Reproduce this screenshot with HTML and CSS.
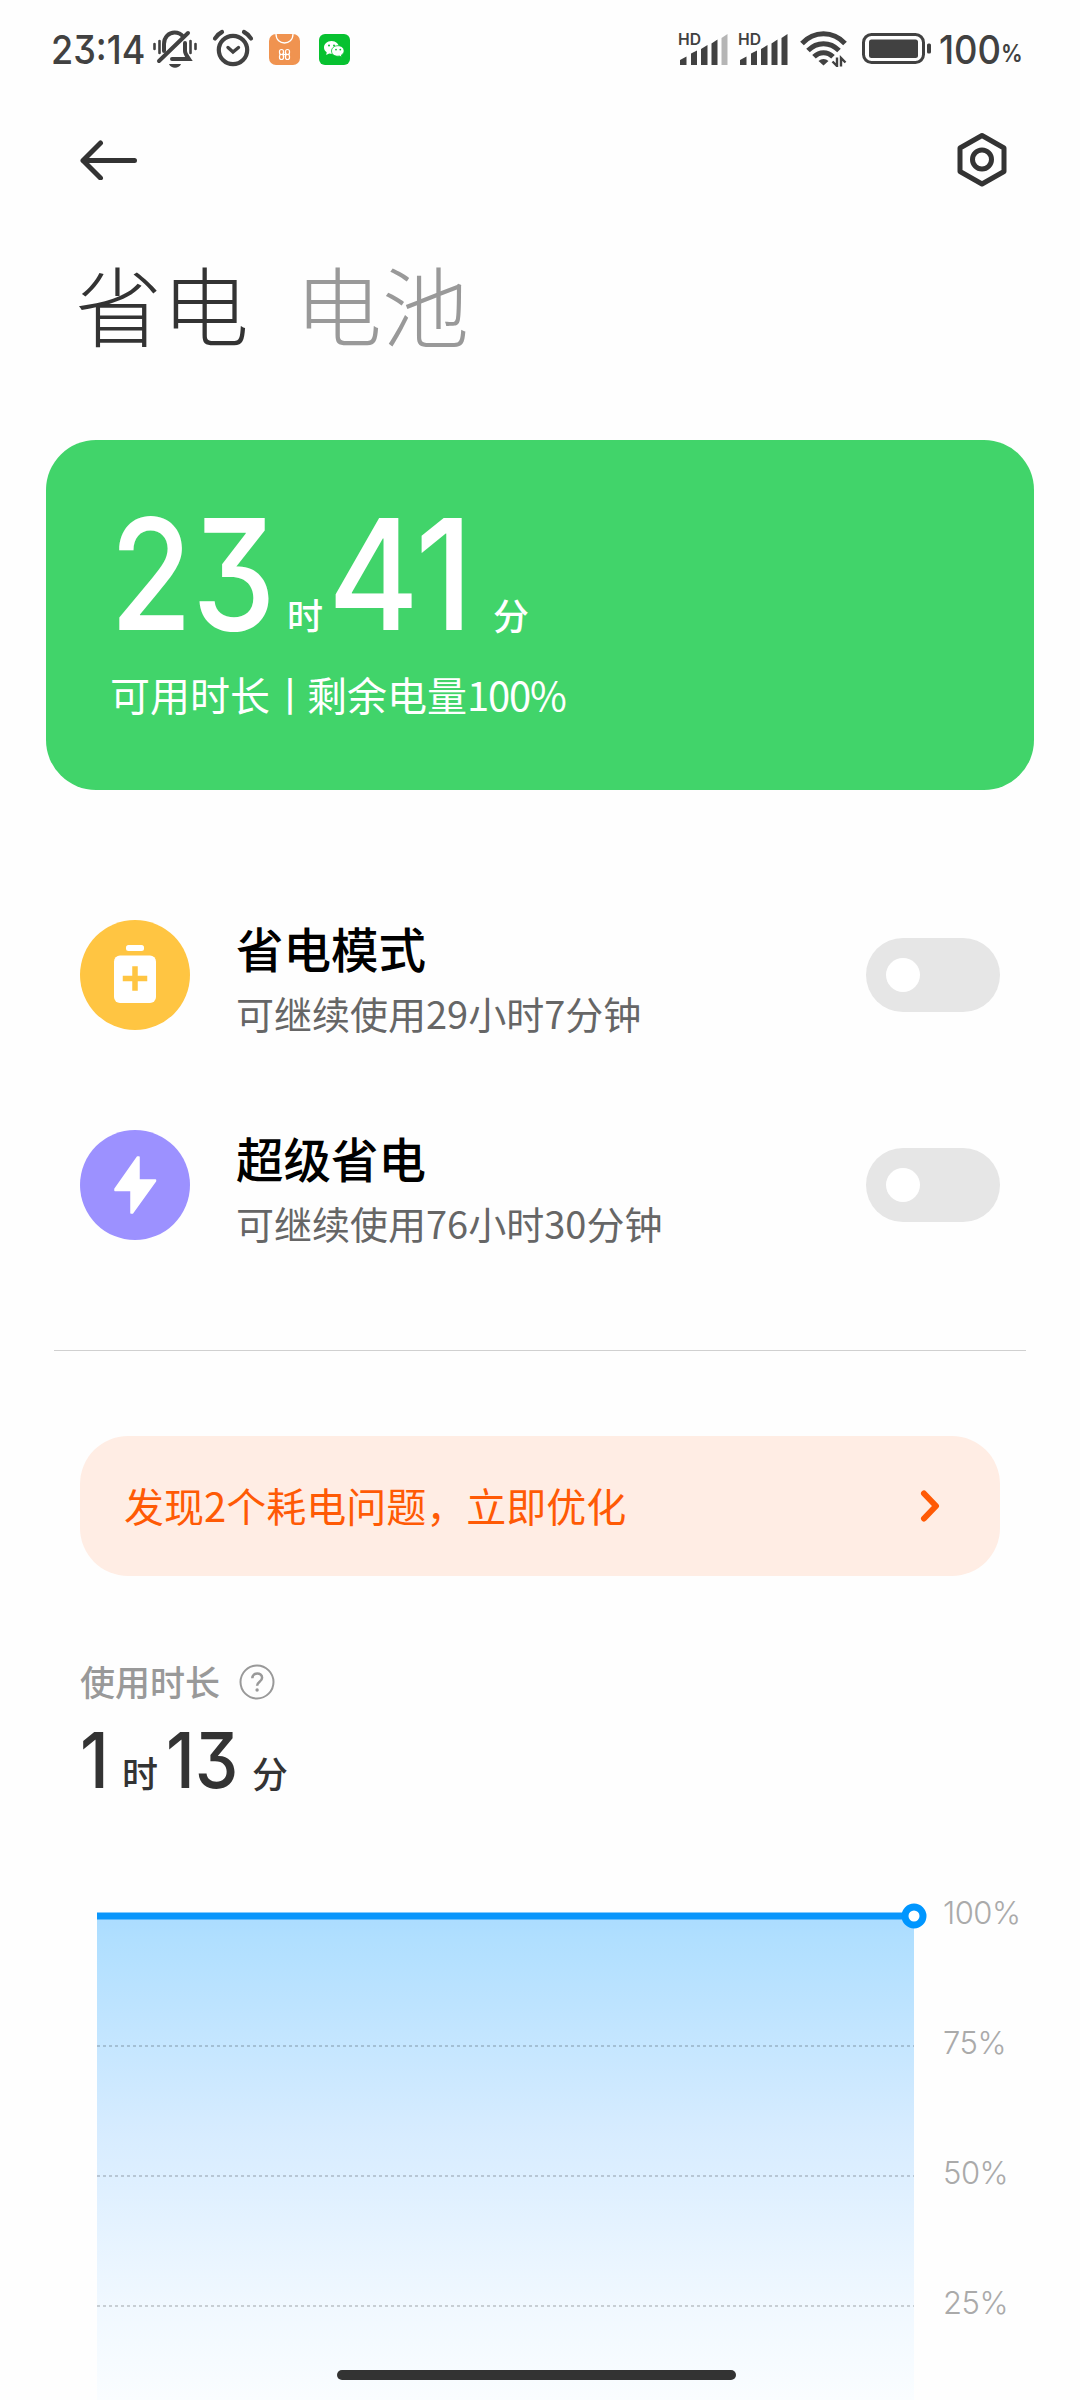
FILE: index.html
```html
<!DOCTYPE html>
<html lang="zh-CN">
<head>
<meta charset="utf-8">
<title>省电</title>
<link rel="stylesheet" href="styles.css">
</head>
<body>
<div class="screen">
  <header class="status">
    <div class="status-left">
      <span class="clock"><span class="num">23:14</span></span>
      <svg class="ic-bell" width="46" height="40" viewBox="0 0 46 40" fill="none" stroke="#414141" stroke-width="3" stroke-linecap="round">
        <path d="M2.500 15v5M7.500 12v12M43.500 15v5M38.500 12v12" stroke-width="2.600"/>
        <path d="M12 22v-7C12 8 17 3.500 22.500 3.500c4 0 7 2 8.500 4" stroke-width="4"/>
        <path d="M33 14v8c0 3 2 5 4 8H20" stroke-width="4"/>
        <path d="M36 4 7 32" stroke-width="4"/>
        <path d="M17 35h12c-2 5-10 5-12 0z" fill="#414141" stroke="none"/>
      </svg>
      <svg class="ic-alarm" width="42" height="40" viewBox="0 0 42 40" fill="none" stroke="#414141" stroke-linecap="round">
        <circle cx="21" cy="21" r="14.200" stroke-width="4.200"/>
        <path d="M3 9.500C5 6 7 4.500 10 3M32 3c3 1.500 5 3 7 6.500" stroke-width="4.200"/>
        <path d="m16 18.500 5 4.500 5.500-4.500" stroke-width="3.400"/>
      </svg>
      <svg class="ic-bag" width="31" height="31" viewBox="0 0 31 31">
        <rect width="31" height="31" rx="7" fill="#f09350"/>
        <path d="M7 0c0 12 17 12 17 0" fill="none" stroke="#fff" stroke-width="1.300"/>
        <g fill="none" stroke="#fff" stroke-width="1.200"><rect x="10.500" y="15.500" width="4" height="5" rx="2"/><rect x="16.500" y="15.500" width="4" height="5" rx="2"/><rect x="10.500" y="20.500" width="4" height="5" rx="2"/><rect x="16.500" y="20.500" width="4" height="5" rx="2"/><path d="M14.500 18v5M16.500 18v5M10.500 20.500h10"/></g>
      </svg>
      <svg class="ic-chat" width="31" height="31" viewBox="0 0 31 31">
        <rect width="31" height="31" rx="6" fill="#07c130"/>
        <path d="M12.500 7C8 7 5 10 5 13.500c0 2 1 3.500 2.700 4.800L7.200 21l3-1.600c5 1.300 9.800-1.500 9.800-6C20 10 17 7 12.500 7z" fill="#fff"/>
        <path d="M19 11.700c-3.700 0-6.500 2.400-6.500 5.300 0 3.500 3.500 5.900 8 5l2.300 1.200-.4-2.200c1.600-1 2.700-2.400 2.700-4 0-2.900-2.500-5.300-6.100-5.300z" fill="#fff" stroke="#07c130" stroke-width=".8"/>
        <g fill="#07c130"><circle cx="10" cy="11.500" r="1"/><circle cx="15" cy="11.500" r="1"/><circle cx="17" cy="15.600" r=".9"/><circle cx="21.300" cy="15.600" r=".9"/></g>
      </svg>
    </div>
    <div class="status-right">
      <svg class="ic-signal" width="50" height="34" viewBox="0 0 50 34" fill="#414141">
        <text x="0" y="13" class="hd" textLength="23" lengthAdjust="spacingAndGlyphs">HD</text>
        <path d="M2 28l6.500-3.500v8.500h-6.500zM13 21.500l6-3V33h-6zM23 17l6.500-4V33H23zM33.500 11.500l6-4V33h-6z" />
        <path d="M43.500 6l6-4V33h-6z" fill="#b5b5b5"/>
      </svg>
      <svg class="ic-signal second" width="50" height="34" viewBox="0 0 50 34" fill="#414141">
        <text x="0" y="13" class="hd" textLength="23" lengthAdjust="spacingAndGlyphs">HD</text>
        <path d="M2 28l6.500-3.500v8.500h-6.500zM13 21.500l6-3V33h-6zM23 17l6.500-4V33H23zM33.500 11.500l6-4V33h-6zM43.500 6l6-4V33h-6z"/>
      </svg>
      <svg class="ic-wifi" width="48" height="36" viewBox="0 0 48 36" fill="none" stroke="#414141" stroke-width="5">
        <path d="M2 12.500C14-.5 33-.5 45 12.500M8 19.500c9-9 22-9 31 0M14 25.800c5.500-5.500 13.500-5.500 19 0"/>
        <path d="M18.500 30c3-2.800 7-2.800 10 0l-5 4.500z" fill="#414141" stroke="none"/>
        <path d="M37 26.500v8.500l-4.500-4.500M41 35.500V27l4.500 4.500" stroke-width="2.400"/>
      </svg>
      <svg class="ic-battery" width="70" height="32" viewBox="0 0 70 32">
        <rect x="1.500" y="1.500" width="60" height="28" rx="8" fill="none" stroke="#414141" stroke-width="3"/>
        <rect x="7" y="6.500" width="49" height="18.500" rx="2.500" fill="#414141"/>
        <rect x="65" y="10.500" width="4" height="10" rx="1.500" fill="#414141"/>
      </svg>
      <span class="level"><span class="num">100</span></span><span class="pct"><span class="num">%</span></span>
    </div>
  </header>

  <nav class="nav">
    <svg width="60" height="40" viewBox="0 0 60 40" fill="none" stroke="#333" stroke-width="5" stroke-linecap="round" stroke-linejoin="round"><path d="M54.500 20.500H3M20.500 3 3 20.500 20.500 38"/></svg>
    <svg width="52" height="56" viewBox="0 0 52 56" fill="none" stroke="#333" stroke-width="5" stroke-linejoin="round"><path d="M26 3.500 48 16v23.500L26 52 4 39.500V16z"/><circle cx="26" cy="27.500" r="9.500"/></svg>
  </nav>

  <div class="tabs"><span class="tab active">省电</span><span class="tab">电池</span></div>

  <section class="card">
    <div class="big">
      <span class="n n23"><span class="num">23</span></span><span class="unit u1">时</span><span class="n n41"><span class="num">41</span></span><span class="unit">分</span>
    </div>
    <div class="remain">可用时长<span class="bar">丨</span>剩余电量<span class="rn">100%</span></div>
  </section>

  <section class="modes">
    <div class="mode">
      <div class="badge yellow"><svg width="110" height="110" viewBox="0 0 110 110"><rect x="46" y="25" width="18" height="6" rx="2.500" fill="#fff"/><rect x="34" y="35.500" width="42" height="47.500" rx="6" fill="#fff"/><path d="M55 49v19M45.500 58.500h19" stroke="#ffc542" stroke-width="5.500" stroke-linecap="square" stroke-linejoin="round"/></svg></div>
      <div class="texts"><div class="name">省电模式</div><div class="desc">可继续使用<span>29</span>小时<span>7</span>分钟</div></div>
      <div class="switch"><i></i></div>
    </div>
    <div class="mode">
      <div class="badge purple"><svg width="110" height="110" viewBox="0 0 110 110"><path d="M57.500 27 35 59v1.500h16V83h1.500L75.500 51v-1H59V27z" fill="#fff" stroke="#fff" stroke-width="1.500" stroke-linejoin="round"/></svg></div>
      <div class="texts"><div class="name">超级省电</div><div class="desc">可继续使用<span>76</span>小时<span>30</span>分钟</div></div>
      <div class="switch"><i></i></div>
    </div>
  </section>

  <section class="usage">
    <div class="alert"><span>发现2个耗电问题，立即优化</span>
      <svg width="22" height="34" viewBox="0 0 22 34" fill="none" stroke="#ff5a05" stroke-width="6" stroke-linecap="round" stroke-linejoin="round"><path d="M4 4.500 16 17 4 29.500"/></svg></div>
    <div class="label"><span>使用时长</span>
      <svg width="36" height="36" viewBox="0 0 36 36" fill="none" stroke="#999"><circle cx="18" cy="18" r="16.500" stroke-width="2"/><path d="M13.300 14.300c0-6.500 9.800-6.300 9.800-.6 0 4-5 4-5 8" stroke-width="2.500"/><circle cx="18.100" cy="26" r="1.700" fill="#999" stroke="none"/></svg></div>
    <div class="dur"><span class="n m1"><span class="num">1</span></span><span class="unit v1">时</span><span class="n m13"><span class="num">13</span></span><span class="unit">分</span></div>
  </section>

  <section class="chart">
    <svg width="830" height="508" viewBox="0 0 830 508">
      <defs><linearGradient id="fill" x1="0" y1="0" x2="0" y2="1"><stop offset="0" stop-color="#abdcff"/><stop offset=".05" stop-color="#b0dfff"/><stop offset=".45" stop-color="#d7ecff"/><stop offset=".8" stop-color="#f0f8ff"/><stop offset="1" stop-color="#fafdff"/></linearGradient></defs>
      <rect x="0" y="24" width="817" height="484" fill="url(#fill)"/>
      <path d="M0 154h817M0 284h817M0 414h817" stroke="#000" stroke-opacity=".17" stroke-width="2" stroke-dasharray="3 3"/>
      <path d="M0 24h817" stroke="#0a96fb" stroke-width="7"/>
      <circle cx="817" cy="24" r="9" fill="#fff" stroke="#0096ff" stroke-width="7"/>
    </svg>
    <div class="axis"><span>100%</span><span>75%</span><span>50%</span><span>25%</span></div>
  </section>
  <div class="home"></div>
</div>
</body>
</html>
```
FILE: styles.css
```css
* { box-sizing: border-box; }
body { margin: 0; background: #fefefe; }
svg { display: block; flex: none; }
.screen {
  position: relative;
  width: 1080px;
  height: 2400px;
  overflow: hidden;
  font-family: "Noto Sans CJK SC", sans-serif;
  color: #333;
}
.num {
  display: inline-block;
  font-family: Inter, sans-serif;
  font-feature-settings: "cv09";
  transform-origin: left;
  white-space: nowrap;
}

.status { display: flex; justify-content: space-between; height: 100px; padding: 29px 58px 0 51px; color: #414141; }
.status-left, .status-right { display: flex; align-items: flex-start; }
.clock { width: 101px; height: 40px; font-size: 40px; line-height: 40px; font-weight: 500; margin-top: -2px; }
.clock .num { transform: scaleX(.9); }
.ic-alarm { margin: 0 0 0 14px; }
.ic-bag { margin: 5px 0 0 15px; }
.ic-chat { margin: 5px 0 0 19px; }
.ic-signal { margin-top: 3px; overflow: visible; }
.second { margin-left: 10px; }
.hd { font: 600 16px Inter, sans-serif; }
.ic-wifi { margin: 2px 0 0 12px; }
.ic-battery { margin: 4px 0 0 14px; }
.level { width: 64px; margin-left: 7px; font-size: 40px; line-height: 40px; font-weight: 500; margin-top: -2px; }
.level .num { transform: scaleX(.91); }
.pct { width: 19px; font-size: 24px; line-height: 22px; padding-top: 12px; font-weight: 600; }
.pct .num { transform: scaleX(.9); margin-left: -2px; }

.nav { display: flex; justify-content: space-between; align-items: center; height: 120px; padding: 0 72px 0 80px; }
.tabs { display: flex; gap: 46px; height: 220px; padding: 20px 75px 0; font-size: 87px; line-height: 127px; font-weight: 300; }
.tab { color: #999; }
.tab.active { color: #333; }

.card { height: 350px; margin: 0 46px; padding: 36px 64px 0; border-radius: 50px; background: #41d46a; color: #fff; }
.big, .dur { display: flex; align-items: baseline; }
.big { height: 174px; line-height: 174px; }
.n { flex: none; }
.big .n { font-size: 154px; font-weight: 500; }
.n23 { width: 177px; }
.n41 { width: 163px; }
.big .num { transform: scaleX(.865); }
.big .n41 .num { transform: scaleX(.9); margin-left: -2px; }
.unit { font-size: 36px; font-weight: 500; }
.u1 { width: 43px; }
.remain { font-size: 40px; line-height: 60px; margin-top: 14px; white-space: nowrap; }
.bar { letter-spacing: -3px; }
.rn { letter-spacing: -1.200px; }

.modes { height: 561px; margin: 0 54px; padding: 105px 26px 0; border-bottom: 1px solid #d0d0d0; }
.mode { display: flex; align-items: center; height: 160px; margin-bottom: 50px; }
.badge { width: 110px; height: 110px; border-radius: 50%; flex: none; }
.yellow { background: #ffc542; }
.purple { background: #9c91ff; }
.texts { flex: 1; margin-left: 46px; padding-top: 9px; }
.name { font-size: 47.500px; line-height: 66px; font-weight: 500; color: #000; }
.desc { font-size: 38px; line-height: 63px; color: #666; }
.switch { width: 134px; height: 74px; border-radius: 37px; padding: 20px; background: #e6e6e6; }
.switch i { display: block; width: 34px; height: 34px; border-radius: 50%; background: #fff; }

.usage { padding: 85px 80px 0; }
.alert { display: flex; align-items: center; justify-content: space-between; height: 140px; padding: 0 58px 0 44px; border-radius: 48px; background: #ffede4; color: #ff5a05; font-size: 40px; }
.alert span { margin-top: -3px; }
.label { display: flex; align-items: center; gap: 19px; height: 52px; margin-top: 80px; font-size: 35px; font-weight: 500; color: #999; }
.label span { margin-top: -3px; }
.dur { height: 90px; line-height: 90px; margin-top: 2px; }
.dur .n { font-size: 77px; font-weight: 500; }
.dur .num { transform: scaleX(.9); }
.m1 { width: 42px; }
.v1 { width: 44px; }
.m13 { width: 86px; }

.chart { display: flex; padding-left: 97px; margin-top: 92px; height: 508px; }
.axis { display: flex; flex-direction: column; margin-left: 16px; font: 300 31px/130px Inter, sans-serif; letter-spacing: -.5px; color: #aaa; margin-top: -44px; }
.axis span { flex: none; height: 130px; }
.home { position: absolute; left: 337px; top: 2370px; width: 399px; height: 10px; border-radius: 5px; background: #333; }
```
